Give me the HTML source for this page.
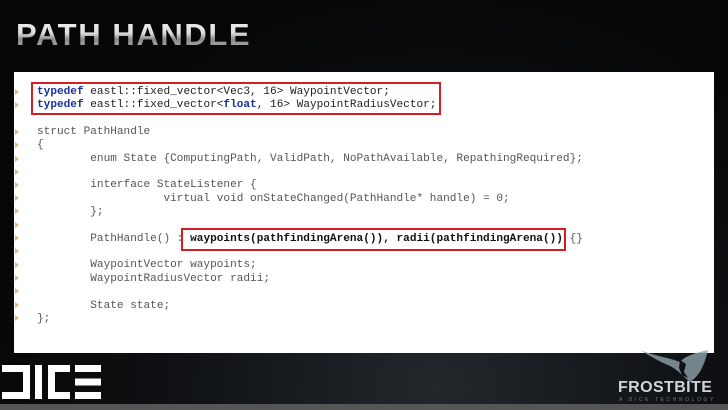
<!DOCTYPE html>
<html><head><style>
body{margin:0;width:728px;height:410px;overflow:hidden;background:#070707;position:relative;font-family:"Liberation Sans",sans-serif}
.bg{position:absolute;left:0;top:0;width:728px;height:410px;background:radial-gradient(ellipse at 60% 95%,#23272b 0%,#0e1013 45%,#060606 75%)}
.title{position:absolute;left:16px;top:17px;font-weight:bold;font-size:31px;letter-spacing:1.6px;color:#ccc;background:linear-gradient(#f4f4f4 0%,#dcdcdc 45%,#8a8a8a 62%,#bdbdbd 100%);-webkit-background-clip:text;background-clip:text;-webkit-text-fill-color:transparent}
.panel{position:absolute;left:14px;top:72px;width:700px;height:281px;background:#fff}
.code{position:absolute;left:23px;top:14px;font-family:"Liberation Mono",monospace;font-size:11.1px;line-height:13.35px;color:#555;white-space:pre}
.kw{color:#1a2fa0;font-weight:bold}
.b{color:#111;font-weight:bold}
.box{position:absolute;border:2px solid #d21f26}
.bul{position:absolute;left:1px;width:0;height:0;border-top:3px solid transparent;border-bottom:3px solid transparent;border-left:4px solid #d9b98a}
.bar{position:absolute;left:0;top:404px;width:728px;height:6px;background:#555}
</style></head><body>
<div class="bg"></div>
<div class="title">PATH HANDLE</div>
<div class="panel">
<div class="code"><span class="kw">typedef</span><span style="color:#222"> eastl::fixed_vector&lt;Vec3, 16&gt; WaypointVector;</span>
<span class="kw">typedef</span><span style="color:#222"> eastl::fixed_vector&lt;<span class="kw">float</span>, 16&gt; WaypointRadiusVector;</span>

struct PathHandle
{
        enum State {ComputingPath, ValidPath, NoPathAvailable, RepathingRequired};

        interface StateListener {
                   virtual void onStateChanged(PathHandle* handle) = 0;
        };

        PathHandle() : <span class="b">waypoints(pathfindingArena()), radii(pathfindingArena())</span> {}

        WaypointVector waypoints;
        WaypointRadiusVector radii;

        State state;
};</div>
<div class="box" style="left:17px;top:10px;width:406px;height:29px"></div>
<div class="box" style="left:167px;top:156px;width:381px;height:19px"></div>
<div class="bul" style="top:17px"></div><div class="bul" style="top:30px"></div>
<div class="bul" style="top:57px"></div><div class="bul" style="top:70px"></div><div class="bul" style="top:84px"></div><div class="bul" style="top:97px"></div><div class="bul" style="top:110px"></div><div class="bul" style="top:123px"></div><div class="bul" style="top:136px"></div><div class="bul" style="top:150px"></div><div class="bul" style="top:163px"></div><div class="bul" style="top:176px"></div><div class="bul" style="top:190px"></div><div class="bul" style="top:203px"></div><div class="bul" style="top:216px"></div><div class="bul" style="top:230px"></div><div class="bul" style="top:243px"></div>
</div>
<svg style="position:absolute;left:0;top:362px" width="110" height="40" viewBox="0 0 110 40">
<g fill="#fff">
<path d="M2 3h28v34H2v-7h21V10H2z"/>
<rect x="35" y="3" width="7" height="34"/>
<path d="M48 3h22v7H55v20h15v7H48z"/>
<path d="M75 3h26v7H75zM75 16.5h26v7H75zM75 30h26v7H75z"/>
</g></svg>
<svg style="position:absolute;left:640px;top:348px" width="80" height="40" viewBox="0 0 80 40">
<path d="M0 2 C15 8 30 10 40 14 C45 8 55 5 68 2 C65 15 60 28 50 34 C45 30 38 22 30 18 C20 14 10 8 0 2Z" fill="#8fa2ad" opacity="0.8"/>
<path d="M40 12l6 4-2 8 4 6-6-3-3-7z" fill="#111"/>
</svg>
<div style="position:absolute;left:618px;top:379px;font-weight:bold;font-size:16px;color:#d0d4d8;letter-spacing:0.4px">FROSTBITE</div>
<div style="position:absolute;left:619px;top:397px;font-size:5px;color:#777;letter-spacing:2.6px">A DICE TECHNOLOGY</div>
<div class="bar"></div>
</body></html>
